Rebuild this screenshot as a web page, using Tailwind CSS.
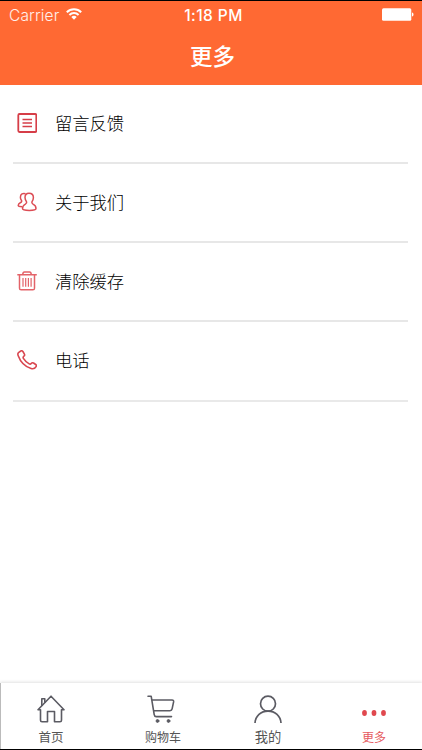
<!DOCTYPE html>
<html lang="zh-CN">
<head>
    <meta charset="UTF-8">
    <meta name="viewport" content="width=device-width, initial-scale=1.0">
    <title>更多</title>
    <script src="https://cdn.jsdelivr.net/npm/@tailwindcss/browser@4"></script>
</head>
<body class="bg-white font-['Inter','Noto_Sans_CJK_SC',sans-serif]">
    <div class="flex flex-col h-screen overflow-hidden border-y border-black">
        <header class="h-[84px] shrink-0 bg-[#ff6933] text-white">
            <!-- status bar -->
            <div class="grid grid-cols-3 items-center h-7 pl-[9px] pr-2">
                <div class="flex items-center gap-[7px] pt-px">
                    <span class="text-[15.5px] font-light tracking-[0.15px] text-white/90">Carrier</span>
                    <svg class="w-4 h-3 -mt-1" viewBox="0 0 16 12" fill="none" stroke="currentColor" stroke-width="2">
                        <path d="M.8 4.2a10.2 10.2 0 0 1 14.4 0M3.4 7a6.5 6.5 0 0 1 9.2 0"/>
                        <path d="M8 11.8 5.3 9.1a3.8 3.8 0 0 1 5.4 0z" fill="currentColor" stroke="none"/>
                    </svg>
                </div>
                <span class="text-center text-[15.5px] font-medium tracking-[0.45px] whitespace-nowrap pl-1 pt-px">1:18 PM</span>
                <svg class="w-8 h-[13px] -mt-0.5 justify-self-end" viewBox="0 0 32 13" fill="currentColor">
                    <rect x="0" y="0.3" width="29.3" height="12.4" rx="1.5"/>
                    <path d="M30 4.5c2 .5 2 3.500 0 4z"/>
                </svg>
            </div>
            <h1 class="text-center text-[22.5px] leading-[55px] font-medium pl-[3px]">更多</h1>
        </header>

        <main class="flex-1 pl-[13px] pr-[14px] text-[17.3px] font-light text-black">
            <div class="flex items-center h-[79px] border-b-2 border-[#e7e7e7]">
                <svg class="w-5 h-5 ml-1 mr-[18px] -mt-0.5" viewBox="0 0 20 20" fill="none" stroke="#d63e48" stroke-width="1.8">
                    <rect x="1.300" y="1" width="18" height="18" rx="1.2"/>
                    <path d="M5.500 6.500h9.500M5.500 10h9.500M5.500 13.500h9.500" stroke-width="1.6"/>
                </svg>
                <span>留言反馈</span>
            </div>
            <div class="flex items-center h-[79px] border-b-2 border-[#e7e7e7]">
                <svg class="w-5 h-5 ml-1 mr-[18px] -mt-0.5" viewBox="0 0 20 20" fill="none" stroke="#dc4d55" stroke-width="1.5" stroke-linejoin="round">
                    <path d="M12 1.200c-2.600 0-4 1.800-4 4.300 0 2 .9 3.300 1.500 4.200.5 1-.1 1.800-1.100 2.400-1.900 1-2.900 2-2.900 4.400 0 1.200 2.800 1.900 6.800 1.900s6.700-.7 6.700-1.900c0-2.400-1-3.400-3-4.400-1-.6-1.500-1.400-1-2.400.6-.9 1.400-2.200 1.400-4.200 0-2.500-1.600-4.300-4.400-4.300z"/>
                    <path d="M8.500 1.800C6 .7 3.400 2.200 3.400 5.200c0 1.500.4 2.500 1.100 3.300.5.800 0 1.500-.9 2C1.700 11.500 1.200 12.400 1.200 13.500c0 .9 1.400 1.200 4.100 1.300"/>
                </svg>
                <span>关于我们</span>
            </div>
            <div class="flex items-center h-[79px] border-b-2 border-[#e7e7e7]">
                <svg class="w-5 h-5 ml-1 mr-[18px] -mt-0.5" viewBox="0 0 20 20" fill="none" stroke="#e36369" stroke-width="1.5">
                    <path d="M.3 3.700h19.500M2.500 3.700v13.500c0 1 .6 1.600 1.600 1.600h11.800c1 0 1.600-.6 1.600-1.600V3.700"/>
                    <path d="M5.700 3.500c.2-1.600.7-2.400 1.700-2.400h5.200c1 0 1.500.8 1.700 2.400"/>
                    <path d="M6 7v8.700M8.700 7v8.700M11.400 7v8.700M14.100 7v8.700" stroke-width="1.200"/>
                </svg>
                <span>清除缓存</span>
            </div>
            <div class="flex items-center h-20 border-b-2 border-[#e9e9e9]">
                <svg class="w-5 h-5 ml-1 mr-[18px] -mt-0.5" viewBox="0 0 20 20" fill="none" stroke="#d94750" stroke-width="1.6" stroke-linejoin="round">
                    <path d="M1.800 2.300 3.800 1c.8-.5 1.600-.3 2.100.5l1.500 2.600c.5.9.3 1.500-.5 2.100-.9.700-1 1.300-.5 2.100 1.600 2.500 3.400 4.300 5.800 5.600.8.500 1.400.4 2-.4.700-.9 1.400-1 2.300-.5l2.200 1.500c.8.600.9 1.300.4 2.100-1.100 1.800-2.700 2.700-5 1.900C8.200 16.600 3.200 11.200 1.100 5.400.6 4 .8 3 1.800 2.300z"/>
                </svg>
                <span>电话</span>
            </div>
        </main>

        <!-- tab bar -->
        <nav class="flex h-[66px] shrink-0 border-l border-[#bbb] bg-white shadow-[0_-1px_3px_rgba(0,0,0,0.12)] text-[#555]">
            <a class="flex flex-col items-center w-[100px] pt-3">
                <svg class="w-7 h-7 shrink-0" viewBox="0 0 28 28" fill="none" stroke="#5b5b63" stroke-width="1.600" stroke-linejoin="round" stroke-linecap="round">
                    <path d="M1 14.700 14 1.200l13 13.500h-2.500v10.500c0 1-.5 1.600-1.500 1.600h-5.500v-10.300h-7v10.300H5c-1 0-1.500-.6-1.500-1.600V14.700z"/>
                    <path d="M4.800 10.500V3.700h3v3.600"/>
                </svg>
                <span class="text-[12.500px] leading-4 mt-[7px]">首页</span>
            </a>
            <a class="flex flex-col items-center w-[124px] pt-3">
                <svg class="w-7 h-7 -ml-1 shrink-0" viewBox="0 0 28 28" fill="none" stroke="#5b5b63" stroke-width="1.600" stroke-linejoin="round" stroke-linecap="round">
                    <path d="M1 1.300h3.200l3 18.300c.2 1.300.8 2 2 2h15.300M5 5h20c1.300 0 1.800.7 1.600 1.900l-1.500 7c-.2 1.200-.9 1.800-2.100 1.800H6.700"/>
                    <circle cx="10.500" cy="26" r="1.400" fill="#5b5b63" stroke-width="1"/>
                    <circle cx="21.500" cy="26" r="1.400" fill="#5b5b63" stroke-width="1"/>
                </svg>
                <span class="text-[12px] leading-4 mt-[7px]">购物车</span>
            </a>
            <a class="flex flex-col items-center w-[86px] pt-3">
                <svg class="w-7 h-7 shrink-0" viewBox="0 0 28 28" fill="none" stroke="#5b5b63" stroke-width="1.700">
                    <circle cx="14" cy="8.700" r="7.500"/>
                    <path d="M1 28c.5-7 5.800-11.800 13-11.800S26.500 21 27 28"/>
                </svg>
                <span class="text-[13.300px] leading-4 mt-1.5">我的</span>
            </a>
            <a class="flex flex-col items-center w-[111px] pt-3 pl-[15px] text-[#e65a60]">
                <svg class="w-7 h-7 shrink-0" viewBox="0 0 28 28" fill="#e0484e">
                    <ellipse cx="4.500" cy="18" rx="2.400" ry="3"/>
                    <ellipse cx="14" cy="18" rx="2.400" ry="3"/>
                    <ellipse cx="23.500" cy="18" rx="2.400" ry="3"/>
                </svg>
                <span class="text-[12px] leading-4 mt-[7px]">更多</span>
            </a>
        </nav>
    </div>
</body>
</html>
